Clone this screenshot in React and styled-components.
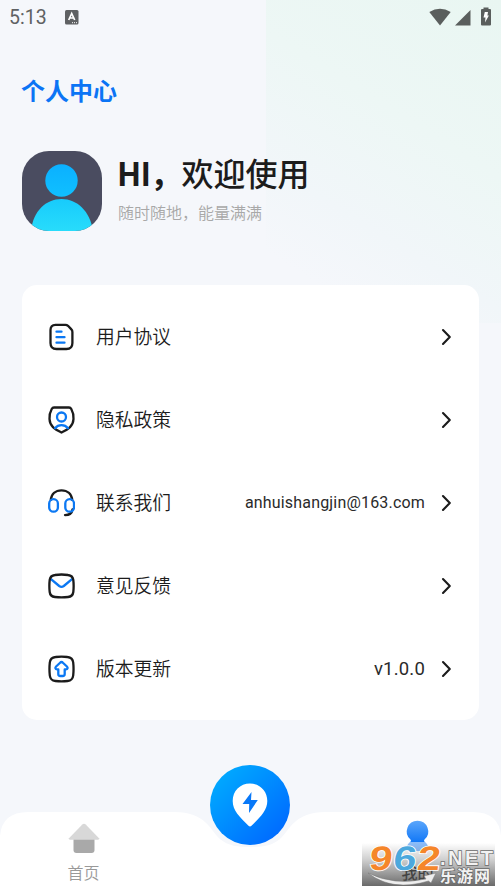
import React from 'react';
import styled, { createGlobalStyle } from 'styled-components';

const GlobalStyle = createGlobalStyle`
  * {
    box-sizing: border-box;
  }
  body {
    margin: 0;
    background: #f5f7fb;
    font-family: Roboto, 'Noto Sans CJK SC', sans-serif;
    color: #1c1c1c;
  }
`;

const Page = styled.div`
  position: relative;
  display: flex;
  flex-direction: column;
  width: 501px;
  height: 892px;
  overflow: hidden;
  background: #f5f7fb;
`;

const Glow = styled.div`
  position: absolute;
  top: 0;
  right: 0;
  width: 235px;
  height: 323px;
  background: linear-gradient(
    212deg,
    #e9f6f2 0%,
    #edf7f5 38%,
    #f1f6f9 66%,
    #f5f7fb 85%
  );
`;

const StatusBar = styled.div`
  position: relative;
  display: flex;
  align-items: center;
  height: 35px;
  padding: 0 9px;
  svg {
    display: block;
  }
`;

const Time = styled.span`
  width: 56px;
  font-size: 19.5px;
  line-height: 35px;
  color: #5f6163;
`;

const StatusIcons = styled.div`
  margin-left: auto;
  height: 33px;
  padding-top: 6px;
`;

const Title = styled.h1`
  position: relative;
  margin: 39px 0 0 21px;
  font-size: 24px;
  line-height: 36px;
  font-weight: 700;
  color: #0b74f5;
`;

const Profile = styled.div`
  position: relative;
  display: flex;
  margin: 41px 0 0 22px;
  height: 80px;
`;

const ProfileText = styled.div`
  margin-left: 16px;
`;

const Hello = styled.div`
  margin-top: -3px;
  font-family: 'Noto Sans CJK SC', sans-serif;
  font-size: 32px;
  line-height: 48px;
  font-weight: 500;
  white-space: nowrap;
  b {
    margin-left: -1px;
    font-weight: 700;
    letter-spacing: -0.8px;
  }
`;

const Slogan = styled.div`
  margin-top: 6px;
  font-size: 16px;
  line-height: 24px;
  font-weight: 350;
  color: #a8a8a8;
`;

const Card = styled.div`
  position: relative;
  margin: 54px 22px 0;
  width: 457px;
  height: 435px;
  padding: 10px 27px 10px 26px;
  border-radius: 15px;
  background: #fff;
`;

const Row = styled.div`
  display: flex;
  align-items: center;
  height: 83px;
`;

const Label = styled.span`
  margin: -2px 0 0 21px;
  font-family: 'Noto Sans CJK SC', sans-serif;
  font-size: 18.8px;
  line-height: 28px;
  font-weight: 350;
`;

const Value = styled.span`
  margin-left: auto;
  margin-right: 16px;
  padding-top: 1px;
  font-size: ${({ $size }) => $size || 16}px;
  letter-spacing: ${({ $spacing }) => $spacing || 0}px;
  line-height: 28px;
  color: #2a2a2a;
`;

const TabBar = styled.div`
  position: absolute;
  left: 0;
  bottom: 0;
  display: flex;
  justify-content: space-between;
  width: 501px;
  height: 80px;
`;

const BarShape = styled.svg`
  position: absolute;
  left: 0;
  top: 0;
`;

const Tab = styled.div`
  position: relative;
  display: flex;
  flex-direction: column;
  align-items: center;
  width: 167px;
  padding-top: ${({ $active }) => ($active ? 8 : 11)}px;
  font-family: 'Noto Sans CJK SC', sans-serif;
  font-size: 16px;
  line-height: 24px;
  font-weight: ${({ $active }) => ($active ? 500 : 350)};
  color: ${({ $active }) => ($active ? '#2b2b2b' : '#999')};
  svg {
    display: block;
    margin-bottom: ${({ $active }) => ($active ? 4 : 6)}px;
  }
`;

const PinButton = styled.div`
  position: absolute;
  left: 210px;
  top: 765px;
  display: flex;
  align-items: center;
  justify-content: center;
  width: 80px;
  height: 80px;
  border-radius: 50%;
  background: linear-gradient(135deg, #00a9ff 12%, #006dff 85%);
`;

const Watermark = styled.div`
  position: absolute;
  left: 362px;
  top: 843px;
  width: 133px;
  height: 43px;
  background: linear-gradient(
    rgba(90, 90, 90, 0) 0%,
    rgba(90, 90, 90, 0.3) 40%,
    rgba(80, 80, 80, 0.85) 100%
  );
  svg {
    display: block;
    overflow: visible;
  }
`;

const lineProps = {
  fill: 'none',
  stroke: '#1b1b1b',
  strokeWidth: 2.3,
  strokeLinecap: 'round',
  strokeLinejoin: 'round',
};

const MenuIcon = ({ children }) => (
  <svg width="27" height="28" viewBox="0 0 27 28" {...lineProps}>
    {children}
  </svg>
);

const BLUE = '#0b78f3';

const menus = [
  {
    label: '用户协议',
    icon: (
      <>
        <path d="M7.500 1.800h10q1.400 0 2.500 1l3.400 3.600q1 1 1 2.500V20q0 6-6 6H8.500q-6 0-6-6V7q0-5 5-5.200z" />
        <path stroke={BLUE} d="M8.500 8.700h5M8.500 14.200h8M8.500 19.700h8" />
      </>
    ),
  },
  {
    label: '隐私政策',
    icon: (
      <>
        <path d="M6 1.500h15q1.500 0 2.300 1.500Q25.800 7.500 25.500 13c-.3 7-5 10-12 13.500C6.500 23 1.800 20 1.500 13Q1.200 7.500 3.700 3 4.500 1.500 6 1.500z" />
        <circle cx="13.500" cy="11" r="4.500" stroke={BLUE} />
        <path stroke={BLUE} d="M7 22.200q2.500-3 6.500-3t6.500 3" />
      </>
    ),
  },
  {
    label: '联系我们',
    value: 'anhuishangjin@163.com',
    size: 16,
    spacing: 0.18,
    icon: (
      <>
        <path d="M2.800 11C3.300 5 7.500 1.300 13.500 1.300S23.700 5 24.200 11M24.500 20.500c-.5 3.500-3 5.600-7.500 5.600" />
        <rect x="1.200" y="10.200" width="8.700" height="12.500" rx="4.300" stroke={BLUE} />
        <rect x="17.300" y="10.200" width="8.700" height="12.500" rx="4.300" stroke={BLUE} />
      </>
    ),
  },
  {
    label: '意见反馈',
    icon: (
      <>
        <path stroke={BLUE} d="M3 7.200l8.200 6.800q2.300 1.700 4.600 0L24 7.200" />
        <path d="M7 3q6.500-1 13 0 4.800.6 5.300 5 .7 6 0 12-.5 4.500-5.300 5-6.500.8-13 0-4.800-.5-5.300-5-.7-6 0-12Q2.200 3.600 7 3z" />
      </>
    ),
  },
  {
    label: '版本更新',
    value: 'v1.0.0',
    size: 18.5,
    spacing: 0.2,
    icon: (
      <>
        <path d="M7.500 2q6-.8 12 0 5.200.5 5.700 5.500.7 6.500 0 13-.5 5-5.700 5.500-6 .8-12 0-5.200-.5-5.700-5.500-.7-6.500 0-13Q2.300 2.500 7.500 2z" />
        <path
          stroke={BLUE}
          d="M13.500 7c.7 0 1.200.5 1.700 1l3.700 3.500c1.300 1.400.7 2.900-1 2.900h-1.200v4.600q0 2-2 2h-2.400q-2 0-2-2v-4.600H9.100c-1.700 0-2.300-1.500-1-2.900L11.800 8c.5-.5 1-1 1.700-1z"
        />
      </>
    ),
  },
];

const Arrow = () => (
  <svg width="11" height="18" viewBox="0 0 11 18" {...lineProps} strokeWidth="2.100">
    <path d="M2 2L8.800 9 2 16" />
  </svg>
);

const MenuRow = ({ menu }) => (
  <Row>
    <MenuIcon>{menu.icon}</MenuIcon>
    <Label>{menu.label}</Label>
    <Value $size={menu.size} $spacing={menu.spacing}>
      {menu.value}
    </Value>
    <Arrow />
  </Row>
);

const Avatar = () => (
  <svg width="80" height="80" viewBox="0 0 80 80">
    <defs>
      <linearGradient id="head" x1="0" y1="0" x2="0" y2="1">
        <stop offset="0" stopColor="#0bb0ff" />
        <stop offset="1" stopColor="#10c0ff" />
      </linearGradient>
      <linearGradient id="body" x1="0" y1="0" x2="0" y2="1">
        <stop offset="0" stopColor="#18cbfc" />
        <stop offset="1" stopColor="#28dcfb" />
      </linearGradient>
      <clipPath id="frame">
        <rect width="80" height="80" rx="27" />
      </clipPath>
    </defs>
    <g clipPath="url(#frame)">
      <rect width="80" height="80" fill="#4a4c60" />
      <circle cx="39.500" cy="29.500" r="16.200" fill="url(#head)" />
      <path d="M9 80C11 60 24 48 39.500 48S68 60 71 80z" fill="url(#body)" />
    </g>
  </svg>
);

const App = () => {
  return (
    <>
      <GlobalStyle />
      <Page>
        <Glow />
        <StatusBar>
          <Time>5:13</Time>
          <svg width="14" height="15" viewBox="0 0 14 15">
            <rect width="13.500" height="14.500" rx="1.500" fill="#5f6163" />
            <path
              d="M3.700 10L6.700 3.500 9.700 10M4.800 8h3.800"
              fill="none"
              stroke="#fff"
              strokeWidth="1.700"
            />
            <path d="M7 12.700h1M9 12.700h1M11 12.700h1" stroke="#fff" />
          </svg>
          <StatusIcons>
            <svg width="64" height="21" viewBox="0 0 64 21" fill="#5a5e5d">
              <path d="M1.300 5Q12-1.300 22.700 5L12 18.500z" />
              <path d="M42.500 3V18.500H27z" />
              <path d="M55.500.5h5V2H62q1 0 1 1v14.500q0 1-1 1h-8q-1 0-1-1V3q0-1 1-1h1.500z" />
              <path fill="#fff" d="M56.800 5h3.200l-.6 3.500h1.500L57 15.500l.5-5h-2z" />
            </svg>
          </StatusIcons>
        </StatusBar>
        <Title>个人中心</Title>
        <Profile>
          <Avatar />
          <ProfileText>
            <Hello>
              <b>HI，</b>欢迎使用
            </Hello>
            <Slogan>随时随地，能量满满</Slogan>
          </ProfileText>
        </Profile>
        <Card>
          {menus.map((menu) => (
            <MenuRow key={menu.label} menu={menu} />
          ))}
        </Card>

        <TabBar>
          <BarShape width="501" height="80" viewBox="0 0 501 80">
            <path
              fill="#fff"
              d="M0 80V24Q2 0 28 0H174C206 0 210 18 220 27C228 34 238 35 250 35S272 34 280 27C290 18 294 0 326 0H473Q499 0 501 24V80z"
            />
          </BarShape>
          <Tab>
            <svg width="32" height="31" viewBox="0 0 32 31">
              <path d="M5.500 15h21v12q0 3-3 3h-15q-3 0-3-3z" fill="#a9a9a9" />
              <path
                d="M14.300 1.500q1.700-1.500 3.400 0L31 15.300q.5 1.400-1 1.400H2q-1.500 0-1-1.400z"
                fill="#d8d8d8"
              />
            </svg>
            首页
          </Tab>
          <Tab $active>
            <svg width="30" height="36" viewBox="0 0 30 36">
              <defs>
                <linearGradient id="me" x1="0" y1="0" x2="0" y2="1">
                  <stop offset="0" stopColor="#5ba6fb" />
                  <stop offset="1" stopColor="#1278f7" />
                </linearGradient>
              </defs>
              <path d="M7.500 21.500h14q4 3 5 9.500h-24q1-6.500 5-9.500z" fill="#8bbcf9" />
              <path
                d="M14.500.800a10.700 10.700 0 0 1 7 18.800q-1 1 0 2.500h-14q1-1.500 0-2.500a10.700 10.700 0 0 1 7-18.800z"
                fill="url(#me)"
              />
            </svg>
            我的
          </Tab>
        </TabBar>

        <PinButton>
          <svg width="36" height="44" viewBox="0 0 36 44">
            <path
              d="M18 .5C8 .5.700 8 .700 18c0 9.500 7 16 15.800 24.800q1.500 1.300 3 0C28.300 34 35.300 27.500 35.300 18 35.300 8 28 .5 18 .5z"
              fill="#fff"
            />
            <path d="M19.500 9L10.500 21h6.700L17 30l8.800-13H19z" fill="#0878f8" />
          </svg>
        </PinButton>

        <Watermark>
          <svg
            width="133"
            height="43"
            viewBox="0 0 133 43"
            fontFamily="Liberation Sans, Noto Sans CJK SC, sans-serif"
            fontWeight="700"
          >
            <path
              d="M6 30Q32 43 64 36L62 33 74 30 69 40 66.500 38Q30 49 6 30z"
              fill="#eee"
              stroke="#777"
              strokeWidth=".5"
            />
            <g
              fontSize="34"
              stroke="#fff"
              strokeWidth="1.600"
              paintOrder="stroke"
              transform="translate(3.500 0) skewX(-7)"
            >
              <text x="6" y="27" textLength="23" lengthAdjust="spacingAndGlyphs" fill="#f5862a">9</text>
              <text x="30" y="27" textLength="23" lengthAdjust="spacingAndGlyphs" fill="#4ba8dd">6</text>
              <text x="54" y="27" textLength="23" lengthAdjust="spacingAndGlyphs" fill="#f5862a">2</text>
            </g>
            <g fill="#f2f2f2" stroke="#6a6a6a" strokeWidth="1.500" paintOrder="stroke">
              <text x="78" y="21.500" fontSize="20" textLength="53">.NET</text>
              <text x="78" y="38.500" fontSize="16" textLength="50">乐游网</text>
            </g>
          </svg>
        </Watermark>
      </Page>
    </>
  );
};

export default App;
